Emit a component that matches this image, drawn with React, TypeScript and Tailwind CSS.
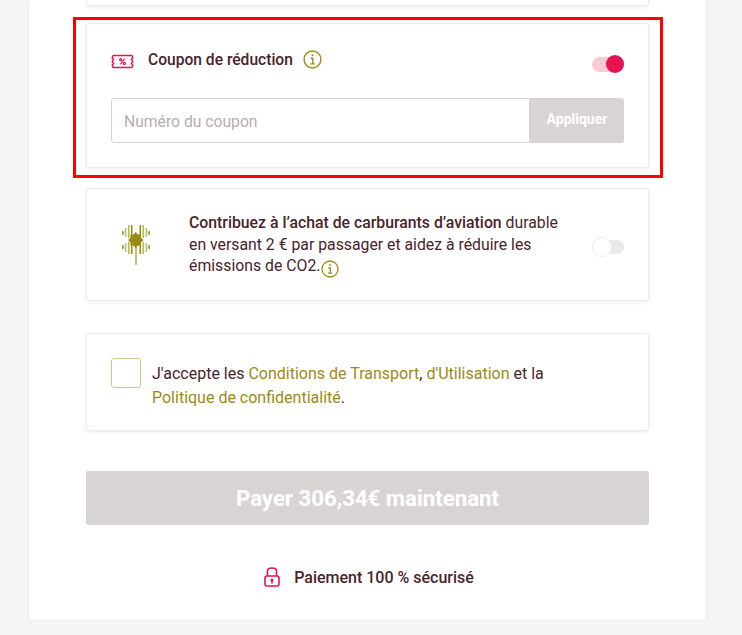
import React from "react";

const font = { fontFamily: '"Roboto", "Liberation Sans", sans-serif' };

function InfoIcon({ className }: { className: string }) {
  return (
    <svg viewBox="0 0 18 18" className={className} fill="none" stroke="#9c8a14">
      <circle cx="9" cy="9" r="8" strokeWidth="1.3" />
      <circle cx="9" cy="5" r="1" fill="#9c8a14" stroke="none" />
      <path d="M7.2 7.8H9.3V13M7 13.2H11.2" strokeWidth="1.3" />
    </svg>
  );
}

function CouponIcon() {
  return (
    <svg viewBox="0 0 24 16" className="w-[23px] h-[15px]" fill="none" stroke="#e5134f" strokeWidth="1.6">
      <path d="M2 1.5H22L23 4L21.5 6L23 8L21.5 10L23 12L22 14.5H2L1 12L2.5 10L1 8L2.5 6L1 4Z" strokeLinejoin="round" />
      <path d="M9.8 11L14.2 5" strokeWidth="1.3" />
      <circle cx="10" cy="6" r="1.1" strokeWidth="1.2" />
      <circle cx="14" cy="10" r="1.1" strokeWidth="1.2" />
    </svg>
  );
}

function LeafIcon() {
  const stripes = [
    { x: 1.2, top: [6, 4], bottom: [20, 4], fill: "#9c8a14" },
    { x: 4, top: [3, 9], bottom: [18, 9], fill: "#c9bd70" },
    { x: 7, top: [0, 13], bottom: [17, 12], fill: "#a3c43c" },
    { x: 10, top: [0, 10], bottom: [20, 9], fill: "#9c8a14" },
    { x: 18.5, top: [0, 10], bottom: [20, 9], fill: "#9c8a14" },
    { x: 21.5, top: [0, 13], bottom: [17, 12], fill: "#a3c43c" },
    { x: 24.5, top: [3, 9], bottom: [18, 9], fill: "#c9bd70" },
    { x: 27.3, top: [6, 4], bottom: [20, 4], fill: "#9c8a14" },
  ];
  return (
    <svg viewBox="0 0 30 40" className="w-[30px] h-[40px]">
      <rect x="14" y="18" width="2" height="22" fill="#c9bd70" />
      {stripes.map((s) => (
        <g key={s.x} fill={s.fill}>
          <rect x={s.x} y={s.top[0]} width="1.5" height={s.top[1]} />
          <rect x={s.x} y={s.bottom[0]} width="1.5" height={s.bottom[1]} />
        </g>
      ))}
      <path d="M14.75 7L17 9.5H20V12.5L22.5 15L20 17.5V20.5H17L14.75 23L12.5 20.5H9.5V17.5L7 15L9.5 12.5V9.5H12.5Z" fill="#9c8a14" />
    </svg>
  );
}

function LockIcon() {
  return (
    <svg viewBox="0 0 16 20" className="w-4 h-5 -mt-[2px]" fill="none" stroke="#e5134f" strokeWidth="1.6">
      <path d="M3.5 9V4C3.5 2 5 1 8 1C11 1 12.5 2 12.5 4V9" />
      <rect x="1" y="9" width="14" height="10" rx="2" />
      <circle cx="8" cy="13" r="1.6" fill="#e5134f" stroke="none" />
      <path d="M8 13.5V16.5" />
    </svg>
  );
}

export default function App() {
  return (
    <div className="h-[635px] overflow-hidden bg-[#f6f4f4] text-[#4a2328]" style={font}>
      <div className="ml-[29px] w-[677px] h-[620px] bg-white rounded-b shadow-[0_0_4px_rgba(0,0,0,0.06)] pl-[57px] pr-[57px]">
        <div className="h-[6px] bg-white rounded-b border-x border-b border-[#ececec] shadow-[0_2px_4px_rgba(0,0,0,0.06)]" />

        <div className="mt-[11px] -ml-[13px] -mr-[14px] border-[3px] border-[#ff0000] pl-[10px] pr-[11px] pt-[3px] pb-[7px]">
          <div className="h-[145px] rounded-[3px] border border-[#ececec] bg-white shadow-[0_1px_4px_rgba(0,0,0,0.08)] px-6 pt-6">
            <div className="flex items-center h-[26px]">
              <CouponIcon />
              <span className="ml-[14px] font-medium text-[15.6px]">Coupon de réduction</span>
              <InfoIcon className="ml-[10px] -mt-1 w-[19px] h-[19px]" />
              <div className="ml-auto relative w-8 h-[15px] mt-[6px] rounded-full bg-[#f9c9d6]">
                <div className="absolute right-0 -top-[2px] w-[18px] h-[18px] rounded-full bg-[#e5134f]" />
              </div>
            </div>
            <div className="mt-6 flex h-[45px]">
              <div className="flex-1 flex items-center pl-3 pt-[2px] border border-[#d8d2d2] rounded-l-[3px] text-[15.7px] text-[#b9adad]">
                Numéro du coupon
              </div>
              <div className="w-[94px] flex items-center justify-center pb-[3px] bg-[#d9d4d4] rounded-r-[3px] text-white font-bold text-[14px]">
                Appliquer
              </div>
            </div>
          </div>
        </div>

        <div className="mt-[10px] h-[113px] rounded-[3px] border border-[#ececec] bg-white shadow-[0_1px_4px_rgba(0,0,0,0.08)] flex items-center pl-[34px] pr-6">
          <LeafIcon />
          <div className="ml-[38px] flex-1 text-[15.8px] leading-[21.5px]">
            <p className="w-[376px]">
              <span className="font-medium">Contribuez à l’achat de carburants d’aviation</span> durable en versant 2 € par passager et aidez à réduire les émissions de CO2.
              <InfoIcon className="inline-block w-[18px] h-[18px] ml-[1px] -mb-[3px]" />
            </p>
          </div>
          <div className="relative w-8 h-[14px] mt-[5px] rounded-full bg-[#ebe8e8]">
            <div className="absolute left-0 -top-[3px] w-5 h-5 rounded-full bg-white border border-[#ececec]" />
          </div>
        </div>

        <div className="mt-[32px] h-[98px] rounded-[3px] border border-[#ececec] bg-white shadow-[0_1px_4px_rgba(0,0,0,0.08)] flex items-start pl-6 pt-6">
          <div className="w-[30px] h-[30px] rounded-[3px] border border-[#cfc68f] shrink-0" />
          <p className="ml-[11px] pt-1 text-[16px] leading-6 w-[440px]">
            J'accepte les <span className="text-[#9c8a14]">Conditions de Transport</span>, <span className="text-[#9c8a14]">d'Utilisation</span> et la <span className="text-[#9c8a14]">Politique de confidentialité</span>.
          </p>
        </div>

        <div className="mt-10 h-[54px] pt-[1px] rounded-[2px] bg-[#d9d4d4] flex items-center justify-center text-white font-bold text-[22.2px]">
          Payer 306,34€ maintenant
        </div>

        <div className="mt-[41px] ml-[3px] flex items-center justify-center">
          <LockIcon />
          <span className="ml-[14px] font-medium text-[16px]">Paiement 100 % sécurisé</span>
        </div>
      </div>
    </div>
  );
}
